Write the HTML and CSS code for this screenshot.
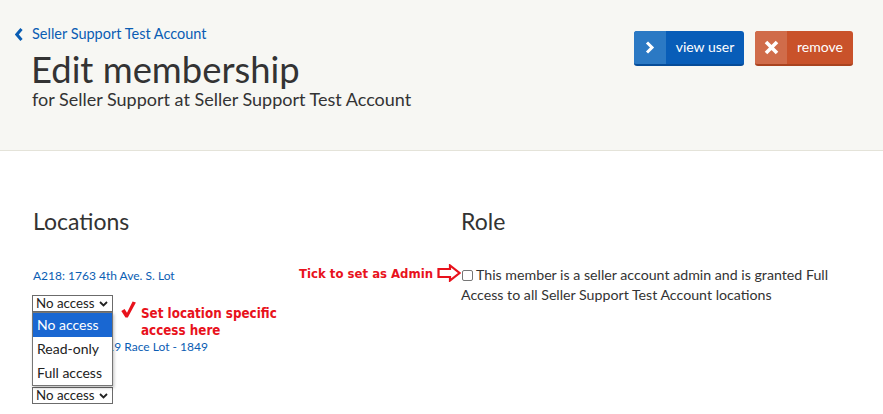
FILE: index.html
```html
<!DOCTYPE html>
<html lang="en">
<head>
<meta charset="utf-8">
<title>Edit membership</title>
<link rel="stylesheet" href="styles.css">
</head>
<body>
<header class="page-header">
  <div class="header-main">
    <a class="back-link" href="#">
      <svg class="back-icon" width="8" height="13" viewBox="0 0 8 13"><path d="M6.5 1 L1.8 6.5 L6.5 12" fill="none" stroke="#0a5db3" stroke-width="3"/></svg>
      <span>Seller Support Test Account</span>
    </a>
    <h1 class="title">Edit membership</h1>
    <p class="subtitle">for Seller Support at Seller Support Test Account</p>
  </div>
  <div class="actions">
    <a class="btn btn-blue" href="#">
      <span class="btn-icon"><svg width="10" height="13" viewBox="0 0 10 13"><path d="M2 1.5 L7 6.5 L2 11.5" fill="none" stroke="#fff" stroke-width="3"/></svg></span>
      <span class="btn-label">view user</span>
    </a>
    <a class="btn btn-red" href="#">
      <span class="btn-icon"><svg width="15" height="15" viewBox="0 0 15 15"><path d="M2 2 L13 13 M13 2 L2 13" fill="none" stroke="#fff" stroke-width="3.6"/></svg></span>
      <span class="btn-label">remove</span>
    </a>
  </div>
</header>

<main class="content">
  <section class="col locations">
    <h2 class="section-title">Locations</h2>

    <div class="loc">
      <a class="loc-link" href="#">A218: 1763 4th Ave. S. Lot</a>
      <div class="select-wrap">
        <select class="access-select">
          <option>No access</option>
          <option>Read-only</option>
          <option>Full access</option>
        </select>
        <svg class="select-caret" width="9" height="6" viewBox="0 0 9 6"><path d="M1 1 L4.5 4.5 L8 1" fill="none" stroke="#222" stroke-width="1.8"/></svg>
        <ul class="dropdown">
          <li class="is-active">No access</li>
          <li>Read-only</li>
          <li>Full access</li>
        </ul>
        <div class="note note-access">
          <svg class="note-check" width="15" height="17" viewBox="0 0 15 17"><path d="M0.3 10 L3.6 8 L6 11.8 L11.6 0.4 L14.9 1.6 L6.8 16.6 L4.5 16.6 Z" fill="#e8121c"/></svg>
          <span>Set location specific<br>access here</span>
        </div>
      </div>
    </div>

    <div class="loc loc--spaced">
      <a class="loc-link" href="#">A219: 140-1419 Race Lot - 1849</a>
      <div class="select-wrap">
        <select class="access-select">
          <option>No access</option>
          <option>Read-only</option>
          <option>Full access</option>
        </select>
        <svg class="select-caret" width="9" height="6" viewBox="0 0 9 6"><path d="M1 1 L4.5 4.5 L8 1" fill="none" stroke="#222" stroke-width="1.8"/></svg>
      </div>
    </div>
  </section>

  <section class="col role">
    <h2 class="section-title">Role</h2>
    <p class="role-text">
      <span class="note note-admin">
        <span>Tick to set as Admin</span>
        <svg class="note-arrow" width="24" height="18" viewBox="0 0 24 18"><path d="M1.5 5 H13 V1.5 L22.5 9 L13 16.5 V13 H1.5 Z" fill="#fff" stroke="#e8121c" stroke-width="2.2" stroke-linejoin="miter"/></svg>
      </span>
      <input class="check" type="checkbox">This member is a seller account admin and is granted Full Access to all Seller Support Test Account locations
    </p>
  </section>
</main>
</body>
</html>
```
FILE: styles.css
```css
* { box-sizing: border-box; }

html, body {
  margin: 0;
  padding: 0;
  background: #fff;
}

body {
  font-family: Lato, "Open Sans", sans-serif;
  color: #333;
  width: 883px;
  height: 414px;
  overflow: hidden;
}

a { text-decoration: none; }

.page-header {
  display: flex;
  justify-content: space-between;
  align-items: flex-start;
  height: 151px;
  padding: 25px 30px 0 15px;
  background: #f7f7f3;
  border-bottom: 1px solid #e4e3d9;
}

.back-link {
  display: flex;
  align-items: center;
  gap: 9px;
  height: 18px;
  font-size: 14.5px;
  line-height: 18px;
  color: #0a5db3;
}

.back-icon { display: block; }

.title {
  margin: 8px 0 0 16px;
  font-size: 36.4px;
  line-height: 36px;
  font-weight: 400;
  color: #333;
}

.subtitle {
  margin: 2px 0 0 17px;
  font-size: 18px;
  line-height: 20px;
  color: #333;
}

.actions {
  display: flex;
  gap: 11px;
  margin-top: 6px;
}

.btn {
  display: flex;
  height: 35px;
  border-radius: 3px;
  overflow: hidden;
  color: #fff;
  font-size: 14px;
}

.btn-icon {
  display: flex;
  align-items: center;
  justify-content: center;
  width: 32px;
}

.btn-label {
  display: flex;
  align-items: center;
  padding: 0 9px 2px 9px;
}

.btn-blue { background: #085db8; border-bottom: 2px solid #064c98; }
.btn-blue .btn-icon { background: #2b79c4; }
.btn-blue .btn-label { width: 78px; justify-content: center; }

.btn-red { background: #c9522a; border-bottom: 2px solid #a9431f; }
.btn-red .btn-icon { background: #d06c4a; }
.btn-red .btn-label { width: 66px; justify-content: center; }

.content {
  display: grid;
  grid-template-columns: 428px 1fr;
  padding: 57px 30px 0 33px;
}

.section-title {
  margin: 0;
  font-size: 23px;
  line-height: 26px;
  font-weight: 400;
  color: #333;
}

.loc:first-of-type { margin-top: 34px; }

.loc { margin-bottom: 27px; }

.loc-link {
  display: block;
  font-size: 12px;
  line-height: 16px;
  color: #0a5db3;
  margin-bottom: 11px;
}

.loc--spaced .loc-link { margin-bottom: 32px; }

.select-wrap {
  position: relative;
  display: block;
  width: 81px;
  height: 17px;
  margin-left: -1px;
}

.access-select {
  -webkit-appearance: none;
  appearance: none;
  display: block;
  width: 81px;
  height: 17px;
  margin: 0;
  padding: 0 0 0 3px;
  border: 1px solid #6b6b6b;
  border-radius: 0;
  background: #fff;
  font-family: Lato, sans-serif;
  font-size: 13.3px;
  line-height: 15px;
  color: #222;
}

.select-caret {
  position: absolute;
  right: 5px;
  top: 6px;
}

.dropdown {
  position: absolute;
  top: 17px;
  left: 0;
  z-index: 5;
  width: 81px;
  margin: 0;
  padding: 0;
  list-style: none;
  background: #fff;
  border: 1px solid #767676;
  box-shadow: 1px 2px 3px rgba(0, 0, 0, 0.25);
}

.dropdown li {
  height: 24px;
  padding-left: 4px;
  font-size: 14px;
  line-height: 24px;
  color: #222;
}

.dropdown li.is-active {
  background: #1967d2;
  color: #fff;
}

.note {
  position: absolute;
  font-family: "DejaVu Sans Condensed", "DejaVu Sans", sans-serif;
  font-stretch: condensed;
  font-weight: 700;
  font-size: 13px;
  line-height: 17px;
  color: #e8121c;
  white-space: nowrap;
}

.note-access {
  left: 89px;
  top: 6px;
  display: flex;
  align-items: flex-start;
  gap: 5px;
}

.note-access span {
  margin-top: 4px;
  font-size: 13.3px;
}

.note-check { display: block; }

.role-text {
  position: relative;
  margin: 31px 0 0 0;
  font-size: 14.2px;
  line-height: 20px;
  color: #333;
}

.note-admin {
  right: 100%;
  top: 0;
  display: flex;
  align-items: center;
  gap: 4px;
  height: 20px;
  margin-top: -2px;
}

.note-arrow { display: block; }

.check {
  -webkit-appearance: none;
  appearance: none;
  display: inline-block;
  vertical-align: -1px;
  width: 11px;
  height: 11px;
  margin: 0 3px 0 1px;
  border: 1px solid #767676;
  border-radius: 2px;
  background: #fff;
}
```
